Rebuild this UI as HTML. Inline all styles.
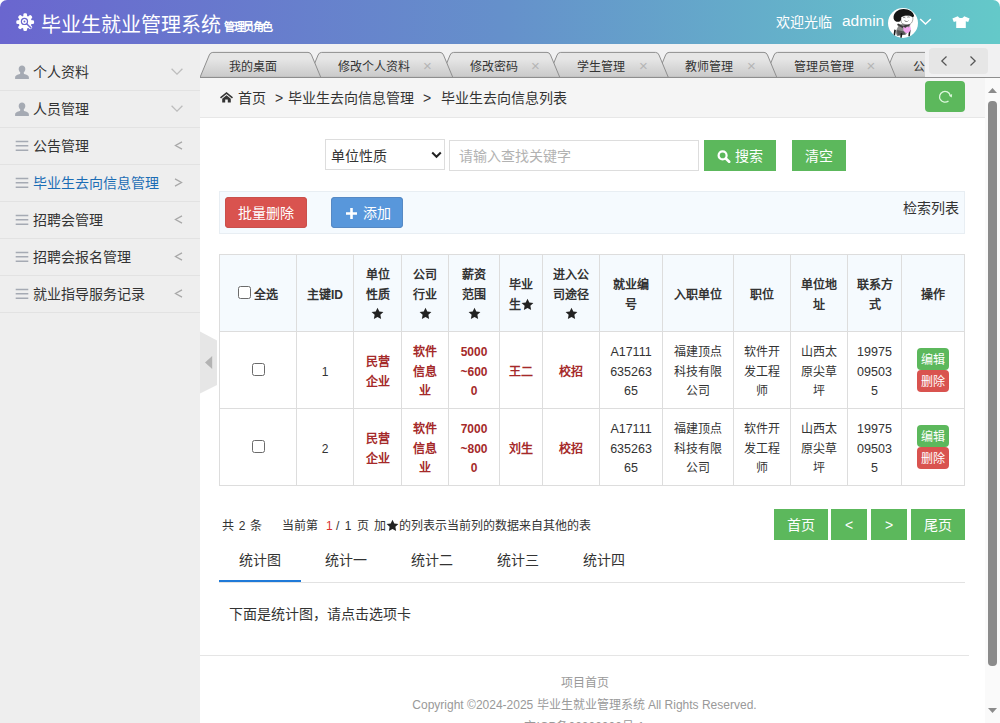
<!DOCTYPE html>
<html lang="zh-CN">
<head>
<meta charset="utf-8">
<title>毕业生就业管理系统</title>
<style>
*{box-sizing:border-box;margin:0;padding:0}
html,body{width:1000px;height:723px;overflow:hidden;background:#fff;font-family:"Liberation Sans",sans-serif;font-size:14px;color:#333}
.abs{position:absolute}
#hdr{position:absolute;left:0;top:0;width:1000px;height:44px;background:linear-gradient(to right,#6a66cf 0%,#6590cb 50%,#64c9c9 100%);border-radius:7px 7px 0 0;color:#fff}
#hdr .title{position:absolute;left:40.500px;top:9.500px;font-size:20px;line-height:30px;white-space:nowrap}
#hdr .role{position:absolute;left:224px;top:19px;font-size:11px;line-height:16px;font-weight:bold;white-space:nowrap;letter-spacing:-1.500px}
#hdr .wel{position:absolute;left:776px;top:11px;font-size:14px;line-height:22px;white-space:nowrap}
#hdr .adm{position:absolute;left:842px;top:10px;font-size:15.500px;line-height:22px;white-space:nowrap}
#side{position:absolute;left:0;top:44px;width:200px;height:679px;background:#eeeeee}
#side ul{list-style:none;position:absolute;left:0;top:10px;width:200px}
#side li{position:relative;height:37px;border-bottom:1px solid #e2e2e2;line-height:36px;font-size:14px;color:#333;padding-left:33px;white-space:nowrap}
#side li.on{color:#1b6db5}
#side li svg{position:absolute}
#tabs{position:absolute;left:200px;top:44px;width:800px;height:34px;background:#f1f1f2;overflow:hidden}
#tabs .line{position:absolute;left:0;top:33px;width:800px;height:1px;background:#8e8e8e}
#tabs .tl{position:absolute;top:14.500px;font-size:12px;line-height:16px;color:#333;white-space:nowrap}
#tabs .tx{position:absolute;top:13.500px;font-size:15px;line-height:16px;color:#b5b5b5;width:10px;text-align:center}
#tabs .nav{position:absolute;left:729px;top:4px;width:59px;height:26px;background:#e6e6e6;border-radius:4px}
#tabs .cover{position:absolute;left:725px;top:0;width:75px;height:33px;background:#f1f1f2}
#crumb{position:absolute;left:200px;top:78px;width:785px;height:40px;background:#f5f5f5;border-bottom:1px solid #e7e7e7;font-size:14px;color:#333;white-space:nowrap}
#crumb span{position:absolute;top:10px;line-height:20px}
#refresh{position:absolute;left:725px;top:3px;width:40px;height:31px;background:#5cb85c;border-radius:4px}
#sb{position:absolute;left:985px;top:78px;width:15px;height:645px;background:#fafafa}
#sb .th{position:absolute;left:3px;top:23px;width:9px;height:565px;border-radius:4px;background:#8b8b8b}
#main{position:absolute;left:200px;top:118px;width:785px;height:605px;background:#fff;overflow:hidden}
.btn{position:absolute;color:#fff;text-align:center;white-space:nowrap;font-size:14px;overflow:hidden}
.g{background:#5cb85c}.r{background:#d9534f}.b{background:#5897db}
#tool .r{box-shadow:inset 0 0 0 1px #c9504c}#tool .b{box-shadow:inset 0 0 0 1px #5689c4}
#tool{position:absolute;left:19px;top:73px;width:746px;height:43px;background:#f5fafe;border:1px solid #e8eef3}
table{position:absolute;left:19px;top:136px;width:745px;border-collapse:collapse;table-layout:fixed;font-size:12px;line-height:19.5px;text-align:center;white-space:nowrap}
td,th{border:1px solid #ddd;padding:5px 0 0 0;overflow:hidden;vertical-align:middle}
th{background:#f5fafe;font-weight:bold;color:#333;height:77px}
td{height:77px;color:#333}
td.k{color:#a52a2a;font-weight:bold}
td.n{font-size:12.5px}
.star{fill:#222;vertical-align:-2px}
.cb{display:inline-block;width:13px;height:13px;border:1px solid #6b6b6b;border-radius:2.5px;background:#fff;vertical-align:-2px;position:relative;top:-2px}
.ops{position:relative;width:32px;height:44px;margin:-5px auto 0 auto}
.ops span{display:block;width:32px;height:22px;padding-top:3px;line-height:19px;font-size:12px;color:#fff;border-radius:4px;font-weight:normal}
#pg{position:absolute;left:0;top:397.500px;font-size:12px;line-height:20px;color:#333;white-space:nowrap}
#pg span{position:absolute;top:0}
#st span{position:absolute;top:432px;font-size:14px;line-height:20px;color:#333;white-space:nowrap}
#foot{position:absolute;left:0;top:537px;width:769px;border-top:1px solid #e5e5e5;text-align:center;font-size:12px;color:#999;line-height:22px;padding-top:16px;white-space:nowrap}
</style>
</head>
<body>
<div id="hdr">
<svg class="abs" style="left:14.800px;top:12.200px" width="20.400" height="20.400" viewBox="-11 -11 22 22"><g fill="#fff"><circle r="7"/><rect x="-2" y="-9.600" width="4" height="4.500" rx="1.500" transform="rotate(0)"/><rect x="-2" y="-9.600" width="4" height="4.500" rx="1.500" transform="rotate(45)"/><rect x="-2" y="-9.600" width="4" height="4.500" rx="1.500" transform="rotate(90)"/><rect x="-2" y="-9.600" width="4" height="4.500" rx="1.500" transform="rotate(135)"/><rect x="-2" y="-9.600" width="4" height="4.500" rx="1.500" transform="rotate(180)"/><rect x="-2" y="-9.600" width="4" height="4.500" rx="1.500" transform="rotate(225)"/><rect x="-2" y="-9.600" width="4" height="4.500" rx="1.500" transform="rotate(270)"/><rect x="-2" y="-9.600" width="4" height="4.500" rx="1.500" transform="rotate(315)"/></g><circle cx="-.8" cy="-.8" r="3.300" fill="none" stroke="#6a67cf" stroke-width="1.300"/><path d="M1.600 1.600L6.500 6.500" stroke="#6a67cf" stroke-width="1.600"/><circle cx="-.8" cy="-.8" r="1" fill="#6a67cf"/></svg>
  <div class="title">毕业生就业管理系统</div>
  <div class="role">管理员角色</div>
  <div class="wel">欢迎光临</div>
  <div class="adm">admin</div>
<svg class="abs" style="left:888px;top:8px" width="30" height="30" viewBox="0 0 30 30"><defs><clipPath id="ac"><circle cx="15" cy="15" r="15"/></clipPath></defs><circle cx="15" cy="15" r="15" fill="#fff"/><g clip-path="url(#ac)"><path d="M11 16.500l8-1 3 2.500-1 4-3 4.500-9 1.500-1.500-4z" fill="#8c8c8c"/><path d="M10 15.500l5 2.500 6.500-2.500 1 1.500-7 3.500-6.500-3.500z" fill="#3a3a3a"/><path d="M9 22l7 1.500 1.500 3-8 1z" fill="#555"/><path d="M6.300 21.500l1.600.4-1 6.500-1.500-.3zM12.800 25l1.600.3-.7 5h-1.600zM21 21.500l1.600.5-.8 6.500-1.500-.3z" fill="#1a1a1a"/><path d="M15.200 18.500l2.500 1.700 1.300-1.800 1.500 1 1.700-1.500.8 3.500-2 3.200-2.800.6-2.800-2.700z" fill="#f3a6f0"/><path d="M12.500 9.500c2-2 9-3 12.300-.5.500 3-.5 6-3 7.300-3 1-6.500.3-8.300-1.500z" fill="#fff" stroke="#555" stroke-width=".5"/><path d="M15 9.800c.7-.5 1.600-.5 2.300 0M19.300 9.300c.7-.5 1.600-.5 2.300 0" stroke="#333" stroke-width=".6" fill="none"/><path d="M16 12.300c1.500 1.200 3.800 1 5-.4-.9 1.900-3.900 2.300-5 .4z" fill="#222"/><path d="M5.600 10.500C5 5 9.500 1.200 15.500 1c5.500-.1 10 2.800 10.700 7.300-1 .8-1.500 1-2 .6-2.500-2-8-2-11 .3.300 2.300-.5 4-2.200 4.600-2.800.300-4.800-.800-5.400-3.300z" fill="#161616"/></g></svg>
<svg class="abs" style="left:919px;top:17px" width="13" height="9" viewBox="0 0 13 9"><path fill="none" stroke="#fff" stroke-width="1.500" d="M1.200 2l5.300 5 5.300-5"/></svg>
<svg class="abs" style="left:952px;top:16px" width="18" height="12" viewBox="0 0 18 12"><path fill="#fff" d="M5.800.2c.8 1.300 2 1.900 3.200 1.900s2.400-.6 3.200-1.900L17.600 2.500 16.200 6l-2.400-.7V12H4.200V5.300L1.800 6 .4 2.500z"/></svg>
</div>
<div id="side">
  <ul>
    <li><svg style="left:14px;top:10px" width="16" height="16" viewBox="0 0 16 16"><path fill="#a5aab3" d="M8 1.6c1.9 0 3.3 1.5 3.3 3.5 0 1.3-.6 2.6-1.5 3.2v.9c0 .5.4.8 1.2 1.1 2.3.8 3.9 1.5 3.9 3.2v1.500H1.100v-1.500c0-1.700 1.600-2.400 3.900-3.200.800-.300 1.200-.600 1.200-1.100v-.900C5.300 7.700 4.700 6.400 4.700 5.100c0-2 1.400-3.500 3.300-3.500z"/></svg>个人资料<svg style="left:170px;top:13px" width="14" height="9" viewBox="0 0 14 9"><path fill="none" stroke="#bdbdbd" stroke-width="1.300" d="M1.600 1.700L7 7.100l5.400-5.400"/></svg></li>
    <li><svg style="left:14px;top:10px" width="16" height="16" viewBox="0 0 16 16"><path fill="#a5aab3" d="M8 1.6c1.9 0 3.3 1.5 3.3 3.5 0 1.3-.6 2.6-1.5 3.2v.9c0 .5.4.8 1.2 1.1 2.3.8 3.9 1.5 3.9 3.2v1.500H1.100v-1.500c0-1.700 1.600-2.400 3.900-3.200.800-.300 1.200-.600 1.200-1.100v-.900C5.300 7.700 4.700 6.400 4.700 5.100c0-2 1.400-3.500 3.300-3.500z"/></svg>人员管理<svg style="left:170px;top:13px" width="14" height="9" viewBox="0 0 14 9"><path fill="none" stroke="#bdbdbd" stroke-width="1.300" d="M1.600 1.700L7 7.100l5.400-5.400"/></svg></li>
    <li><svg style="left:15px;top:12.200px" width="14" height="12" viewBox="0 0 14 12"><path stroke="#a5aab3" stroke-width="1.4" d="M.7 1.500h12.600M.7 5.800h12.600M.7 10.200h12.600"/></svg>公告管理<svg style="left:174px;top:13px" width="9" height="9" viewBox="0 0 9 9"><path fill="none" stroke="#a8a8a8" stroke-width="1.300" d="M8 .9L1.500 4.500 8 8.100"/></svg></li>
    <li class="on"><svg style="left:15px;top:12.200px" width="14" height="12" viewBox="0 0 14 12"><path stroke="#a5aab3" stroke-width="1.4" d="M.7 1.500h12.600M.7 5.800h12.600M.7 10.200h12.600"/></svg>毕业生去向信息管理<svg style="left:174px;top:13px" width="9" height="9" viewBox="0 0 9 9"><path fill="none" stroke="#a8a8a8" stroke-width="1.300" d="M1 .9l6.500 3.600L1 8.100"/></svg></li>
    <li><svg style="left:15px;top:12.200px" width="14" height="12" viewBox="0 0 14 12"><path stroke="#a5aab3" stroke-width="1.4" d="M.7 1.500h12.600M.7 5.800h12.600M.7 10.200h12.600"/></svg>招聘会管理<svg style="left:174px;top:13px" width="9" height="9" viewBox="0 0 9 9"><path fill="none" stroke="#a8a8a8" stroke-width="1.300" d="M8 .9L1.500 4.500 8 8.100"/></svg></li>
    <li><svg style="left:15px;top:12.200px" width="14" height="12" viewBox="0 0 14 12"><path stroke="#a5aab3" stroke-width="1.4" d="M.7 1.500h12.600M.7 5.800h12.600M.7 10.200h12.600"/></svg>招聘会报名管理<svg style="left:174px;top:13px" width="9" height="9" viewBox="0 0 9 9"><path fill="none" stroke="#a8a8a8" stroke-width="1.300" d="M8 .9L1.500 4.500 8 8.100"/></svg></li>
    <li><svg style="left:15px;top:12.200px" width="14" height="12" viewBox="0 0 14 12"><path stroke="#a5aab3" stroke-width="1.4" d="M.7 1.500h12.600M.7 5.800h12.600M.7 10.200h12.600"/></svg>就业指导服务记录<svg style="left:174px;top:13px" width="9" height="9" viewBox="0 0 9 9"><path fill="none" stroke="#a8a8a8" stroke-width="1.300" d="M8 .9L1.500 4.500 8 8.100"/></svg></li>
  </ul>
</div>
<div id="tabs">
<svg class="abs" style="left:0;top:0" width="800" height="34" viewBox="0 0 800 34"><defs><linearGradient id="tg" x1="0" y1="0" x2="0" y2="1"><stop offset="0.250" stop-color="#e6e6e6"/><stop offset="1" stop-color="#c9c9c9"/></linearGradient></defs><g fill="url(#tg)" stroke="#8e8e8e" stroke-width="1">
<path d="M683.8,33.4 L693.1,11.0 Q694.1,8.4 696.6,8.4 L791.7,8.4 Q794.2,8.4 795.2,11.0 L804.5,33.4 Z"/>
<path d="M564.8,33.4 L574.1,11.0 Q575.1,8.4 577.6,8.4 L683.0,8.4 Q685.5,8.4 686.5,11.0 L695.8,33.4 Z"/>
<path d="M456.3,33.4 L465.6,11.0 Q466.6,8.4 469.1,8.4 L564.0,8.4 Q566.5,8.4 567.5,11.0 L576.8,33.4 Z"/>
<path d="M347.8,33.4 L357.1,11.0 Q358.1,8.4 360.6,8.4 L455.5,8.4 Q458.0,8.4 459.0,11.0 L468.3,33.4 Z"/>
<path d="M240.8,33.4 L250.1,11.0 Q251.1,8.4 253.6,8.4 L347.0,8.4 Q349.5,8.4 350.5,11.0 L359.8,33.4 Z"/>
<path d="M108.8,33.4 L118.1,11.0 Q119.1,8.4 121.6,8.4 L240.0,8.4 Q242.5,8.4 243.5,11.0 L252.8,33.4 Z"/>
<path d="M0.0,33.4 L9.3,11.0 Q10.3,8.4 12.8,8.4 L108.0,8.4 Q110.5,8.4 111.5,11.0 L120.8,33.4 Z"/>
</g></svg>
<span class="tl" style="left:28.7px">我的桌面</span>
<span class="tl" style="left:137.5px">修改个人资料</span><span class="tx" style="left:222.5px">×</span>
<span class="tl" style="left:269.5px">修改密码</span><span class="tx" style="left:330.5px">×</span>
<span class="tl" style="left:376.5px">学生管理</span><span class="tx" style="left:438.5px">×</span>
<span class="tl" style="left:485.0px">教师管理</span><span class="tx" style="left:546.5px">×</span>
<span class="tl" style="left:593.5px">管理员管理</span><span class="tx" style="left:666.0px">×</span>
<span class="tl" style="left:712.5px">公告管理</span>
<div class="line"></div>
<div class="cover"></div>
<div class="nav"><svg class="abs" style="left:11px;top:7px" width="8" height="12" viewBox="0 0 8 12"><path fill="none" stroke="#555" stroke-width="1.200" d="M6.500 1.500L1.800 6l4.700 4.500"/></svg><svg class="abs" style="left:40px;top:7px" width="8" height="12" viewBox="0 0 8 12"><path fill="none" stroke="#555" stroke-width="1.200" d="M1.500 1.500L6.200 6 1.500 10.500"/></svg></div>
</div>
<div id="crumb">
<svg class="abs" style="left:19.500px;top:14.300px" width="13" height="10.400" viewBox="0 0 13 10.400"><path fill="#333" d="M6.500 0L0 5.300l1 1.200L6.500 2l5.500 4.500 1-1.200zM6.500 3.300L2.200 6.800v3.600h3V7.600h2.600v2.800h3V6.800z"/></svg>
  <span style="left:37.500px">首页</span>
  <span style="left:75px">&gt;</span>
  <span style="left:87.500px">毕业生去向信息管理</span>
  <span style="left:223px">&gt;</span>
  <span style="left:240.500px">毕业生去向信息列表</span>
  <div id="refresh"><svg class="abs" style="left:12.500px;top:8px" width="16" height="16" viewBox="0 0 16 16"><path fill="none" stroke="#dcf7dc" stroke-width="1.300" d="M12.200 6.400A5.400 5.400 0 1 0 10.500 11.900"/><path fill="#dcf7dc" d="M10.900 6.700L14.100 5l-.3 3.600z"/></svg></div>
</div>
<div id="sb"><div class="th"></div><svg class="abs" style="left:3px;top:10px" width="9" height="5" viewBox="0 0 9 5"><path fill="#8b8b8b" d="M4.500 0L9 5H0z"/></svg><svg class="abs" style="left:3px;top:630px" width="9" height="5" viewBox="0 0 9 5"><path fill="#8b8b8b" d="M0 0h9L4.500 5z"/></svg></div>
<svg class="abs" style="left:200px;top:331px;z-index:5" width="17" height="63" viewBox="0 0 17 63"><path fill="#e6e6e6" d="M0 .5L17 9.500v44.500L0 62.500z"/><path fill="#b3b3b3" d="M5 31.500l7.200-6.500v13z"/></svg>
<div id="main">
  <div class="abs" style="left:125px;top:20.500px;width:120px;height:31px;border:1px solid #ddd;background:#fff;font-size:14px;line-height:32px;padding-left:5px;overflow:hidden">单位性质<svg class="abs" style="left:105px;top:11.500px" width="11" height="8" viewBox="0 0 11 8"><path fill="none" stroke="#222" stroke-width="2" d="M1.200 1.500L5.500 5.800 9.800 1.500"/></svg></div>
  <div class="abs" style="left:249px;top:22px;width:250px;height:31px;border:1px solid #ddd;background:#fff;font-size:14px;line-height:31px;padding-left:9px;color:#b2b2b2;overflow:hidden">请输入查找关键字</div>
  <div class="btn g" style="left:504px;top:22px;width:72px;height:31px;line-height:33px;padding-left:17px">搜索<svg class="abs" style="left:13px;top:10px" width="14" height="13" viewBox="0 0 14 13"><circle cx="5.600" cy="5.400" r="4" fill="none" stroke="#fff" stroke-width="2.200"/><path stroke="#fff" stroke-width="2.600" stroke-linecap="round" d="M8.800 8.500l3.400 3.300"/></svg></div>
  <div class="btn g" style="left:592px;top:22px;width:54px;height:31px;line-height:33px">清空</div>
  <div id="tool">
    <div class="btn r" style="left:5px;top:5px;width:82px;height:31px;line-height:33px;border-radius:4px">批量删除</div>
    <div class="btn b" style="left:111px;top:5px;width:72px;height:31px;line-height:33px;border-radius:4px;padding-left:19px">添加<svg class="abs" style="left:15px;top:10.600px" width="11" height="11" viewBox="0 0 11 11"><path stroke="#fff" stroke-width="2.600" d="M5.500 0v11M0 5.500h11"/></svg></div>
    <div class="abs" style="right:5px;top:6px;font-size:14px;line-height:20px">检索列表</div>
  </div>
  <table>
    <colgroup><col style="width:77px"><col style="width:57px"><col style="width:48px"><col style="width:47px"><col style="width:51px"><col style="width:43px"><col style="width:57px"><col style="width:63px"><col style="width:71px"><col style="width:57px"><col style="width:57px"><col style="width:54px"><col style="width:63px"></colgroup>
    <tr><th><span class="cb"></span> 全选</th><th>主键ID</th><th>单位<br>性质<br><svg class="star" width="13" height="13" viewBox="0 0 24 24"><path d="M12 1.2l3.3 7 7.6 1-5.6 5.3 1.4 7.6L12 18.4l-6.7 3.7 1.4-7.6L1.1 9.2l7.6-1z"/></svg></th><th>公司<br>行业<br><svg class="star" width="13" height="13" viewBox="0 0 24 24"><path d="M12 1.2l3.3 7 7.6 1-5.6 5.3 1.4 7.6L12 18.4l-6.7 3.7 1.4-7.6L1.1 9.2l7.6-1z"/></svg></th><th>薪资<br>范围<br><svg class="star" width="13" height="13" viewBox="0 0 24 24"><path d="M12 1.2l3.3 7 7.6 1-5.6 5.3 1.4 7.6L12 18.4l-6.7 3.7 1.4-7.6L1.1 9.2l7.6-1z"/></svg></th><th>毕业<br>生<svg class="star" width="13" height="13" viewBox="0 0 24 24"><path d="M12 1.2l3.3 7 7.6 1-5.6 5.3 1.4 7.6L12 18.4l-6.7 3.7 1.4-7.6L1.1 9.2l7.6-1z"/></svg></th><th>进入公<br>司途径<br><svg class="star" width="13" height="13" viewBox="0 0 24 24"><path d="M12 1.2l3.3 7 7.6 1-5.6 5.3 1.4 7.6L12 18.4l-6.7 3.7 1.4-7.6L1.1 9.2l7.6-1z"/></svg></th><th>就业编<br>号</th><th>入职单位</th><th>职位</th><th>单位地<br>址</th><th>联系方<br>式</th><th>操作</th></tr>
    <tr><td><span class="cb"></span></td><td>1</td><td class="k">民营<br>企业</td><td class="k">软件<br>信息<br>业</td><td class="k">5000<br>~600<br>0</td><td class="k">王二</td><td class="k">校招</td><td class="n">A17111<br>635263<br>65</td><td>福建顶点<br>科技有限<br>公司</td><td>软件开<br>发工程<br>师</td><td>山西太<br>原尖草<br>坪</td><td class="n">19975<br>09503<br>5</td><td><div class="ops"><span class="g">编辑</span><span class="r">删除</span></div></td></tr>
    <tr><td><span class="cb"></span></td><td>2</td><td class="k">民营<br>企业</td><td class="k">软件<br>信息<br>业</td><td class="k">7000<br>~800<br>0</td><td class="k">刘生</td><td class="k">校招</td><td class="n">A17111<br>635263<br>65</td><td>福建顶点<br>科技有限<br>公司</td><td>软件开<br>发工程<br>师</td><td>山西太<br>原尖草<br>坪</td><td class="n">19975<br>09503<br>5</td><td><div class="ops"><span class="g">编辑</span><span class="r">删除</span></div></td></tr>
  </table>
  <div id="pg">
    <span style="left:22px;word-spacing:1.300px">共 2 条</span>
    <span style="left:82px">当前第</span>
    <span style="left:126px;color:#d9322e">1</span>
    <span style="left:136px;word-spacing:2px">/ 1 页</span>
    <span style="left:174px">加<svg class="star" width="13" height="13" viewBox="0 0 24 24"><path d="M12 1.2l3.3 7 7.6 1-5.6 5.3 1.4 7.6L12 18.4l-6.7 3.7 1.4-7.6L1.1 9.2l7.6-1z"/></svg>的列表示当前列的数据来自其他的表</span>
  </div>
  <div class="btn g" style="left:574px;top:391px;width:54px;height:31px;line-height:33px">首页</div>
  <div class="btn g" style="left:631px;top:391px;width:36px;height:31px;line-height:33px">&lt;</div>
  <div class="btn g" style="left:671px;top:391px;width:36px;height:31px;line-height:33px">&gt;</div>
  <div class="btn g" style="left:711px;top:391px;width:54px;height:31px;line-height:33px">尾页</div>
  <div id="st">
    <span style="left:39px">统计图</span><span style="left:125px">统计一</span><span style="left:211px">统计二</span><span style="left:297px">统计三</span><span style="left:383px">统计四</span>
  </div>
  <div class="abs" style="left:19px;top:464px;width:746px;height:1px;background:#e2e2e2"></div>
  <div class="abs" style="left:19px;top:462px;width:82px;height:2px;background:#1f7ad8"></div>
  <div class="abs" style="left:29px;top:486px;font-size:14px;line-height:20px;white-space:nowrap">下面是统计图，请点击选项卡</div>
  <div id="foot">项目首页<br>Copyright ©2024-2025 毕业生就业管理系统 All Rights Reserved.<br>京ICP备00000000号-1</div>
</div>
</body>
</html>
